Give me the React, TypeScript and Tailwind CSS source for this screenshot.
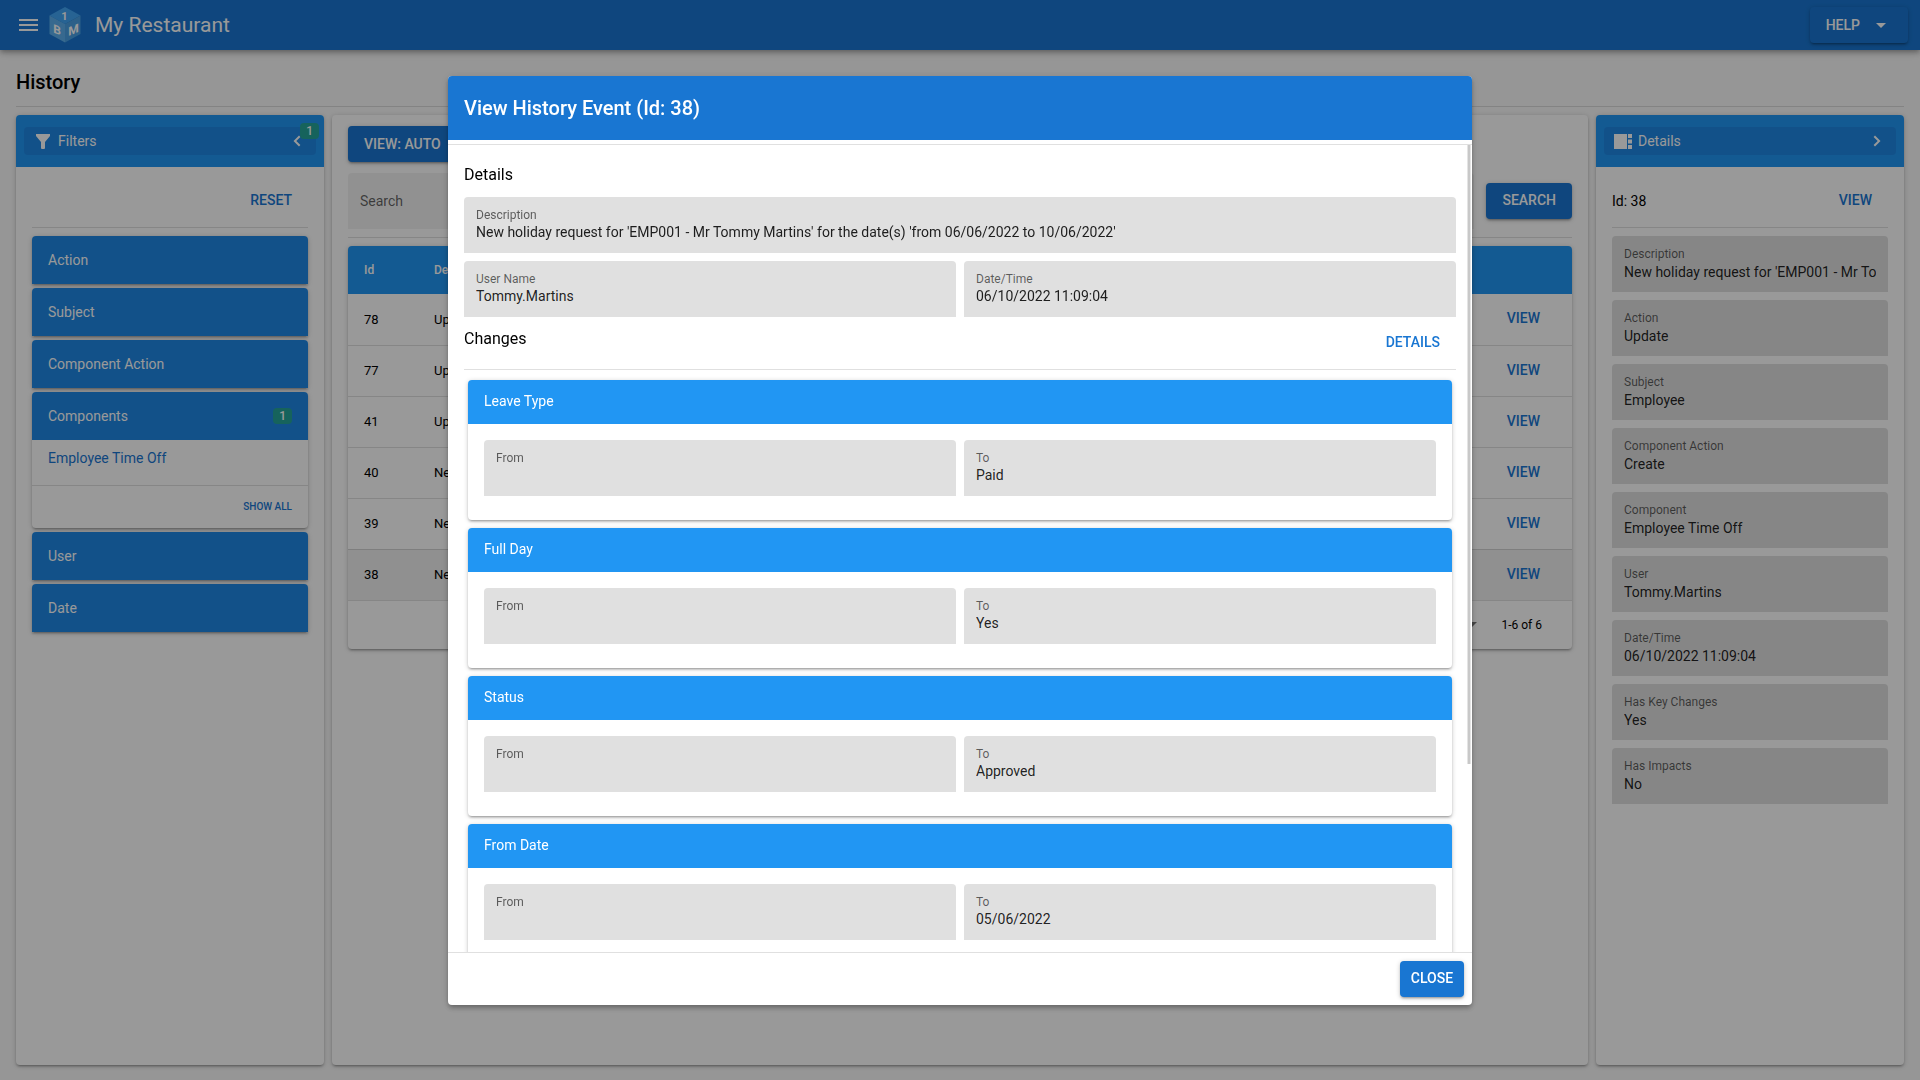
import React from "react";

const elevation =
  "shadow-[0_1px_5px_rgba(0,0,0,0.2),0_2px_2px_rgba(0,0,0,0.14),0_3px_1px_-2px_rgba(0,0,0,0.12)]";

const historyRows = [
  { id: 78, description: "Update" },
  { id: 77, description: "Update" },
  { id: 41, description: "Update" },
  { id: 40, description: "New holiday" },
  { id: 39, description: "New holiday" },
  { id: 38, description: "New holiday" },
];

const detailFields = [
  {
    label: "Description",
    value:
      "New holiday request for 'EMP001 - Mr Tommy Martins' for the date(s) 'from 06/06/2022 to 10/06/2022'",
  },
  { label: "Action", value: "Update" },
  { label: "Subject", value: "Employee" },
  { label: "Component Action", value: "Create" },
  { label: "Component", value: "Employee Time Off" },
  { label: "User", value: "Tommy.Martins" },
  { label: "Date/Time", value: "06/10/2022 11:09:04" },
  { label: "Has Key Changes", value: "Yes" },
  { label: "Has Impacts", value: "No" },
];

const changes = [
  { name: "Leave Type", from: "", to: "Paid" },
  { name: "Full Day", from: "", to: "Yes" },
  { name: "Status", from: "", to: "Approved" },
  { name: "From Date", from: "", to: "05/06/2022" },
];

function Logo() {
  return (
    <svg width="32" height="36" viewBox="0 0 32 36" aria-hidden="true">
      <path d="M16 0 31.500 8.500 16 17 0.500 8.500Z" fill="#42a5f5" />
      <path d="M0.500 8.500 16 17V35.500L0.500 27Z" fill="#5db0ee" />
      <path d="M31.500 8.500 16 17V35.500L31.500 27Z" fill="#4aa0e4" />
      <g fill="#fff" fontFamily="Roboto, sans-serif" fontWeight="700" textAnchor="middle">
        <text x="15.500" y="13" fontSize="11">
          1
        </text>
        <text transform="matrix(1 0.4 0 1 8 27)" fontSize="12">
          B
        </text>
        <text transform="matrix(1 -0.4 0 1 24.500 27)" fontSize="12">
          M
        </text>
      </g>
    </svg>
  );
}

function FilterIcon() {
  return (
    <svg width="14" height="15" viewBox="0 0 14 15" fill="currentColor" aria-hidden="true">
      <path d="M0 0H14V2L9 8V14Q9 15 8 15H6Q5 15 5 14V8L0 2Z" />
    </svg>
  );
}

function SidePanelIcon() {
  return (
    <svg width="18" height="15" viewBox="0 0 18 15" fill="currentColor" aria-hidden="true">
      <path d="M0 0H13V15H0ZM14 0H18V4H14ZM14 5.500H18V9.500H14ZM14 11H18V15H14Z" />
    </svg>
  );
}

function Chevron({ direction }: { direction: "left" | "right" }) {
  return (
    <svg width="8" height="12" viewBox="0 0 8 12" fill="currentColor" aria-hidden="true">
      {direction === "left" ? (
        <path d="M7.400 1.900 6 0.500 0.500 6 6 11.500 7.400 10.100 3.300 6Z" />
      ) : (
        <path d="M0.600 1.900 2 0.500 7.500 6 2 11.500 0.600 10.100 4.700 6Z" />
      )}
    </svg>
  );
}

function Caret() {
  return (
    <svg width="10" height="5" viewBox="0 0 10 5" fill="currentColor" aria-hidden="true">
      <path d="M0 0H10L5 5Z" />
    </svg>
  );
}

function FlatButton({ children }: { children: React.ReactNode }) {
  return (
    <button type="button" className="h-9 px-4 pb-0.5 text-sm font-medium text-[#1976d2]">
      {children}
    </button>
  );
}

interface FieldProps {
  id: string;
  label: string;
  value: string;
  compact?: boolean;
}

function Field({ id, label, value, compact }: FieldProps) {
  return (
    <div className="flex h-14 min-w-0 flex-1 flex-col rounded-t bg-[#e0e0e0] px-3 pt-2.5">
      <label htmlFor={id} className="text-xs leading-4 text-black/60">
        {label}
      </label>
      <input
        id={id}
        readOnly
        value={value}
        className={`w-full bg-transparent text-sm text-black/87 outline-none ${
          compact ? "h-[18px] leading-[18px]" : "h-5 leading-5"
        }`}
      />
    </div>
  );
}

function Badge({ count }: { count: number }) {
  return (
    <span className="block h-4 rounded bg-[#26a69a] px-1.5 text-xs leading-4 font-medium text-white">
      {count}
    </span>
  );
}

function FilterGroup({ title, count }: { title: string; count?: number }) {
  return (
    <button
      type="button"
      className="flex h-12 w-full items-center justify-between rounded-t bg-[#1e88e5] px-4 text-sm text-white"
    >
      {title}
      {count && <Badge count={count} />}
    </button>
  );
}

function FiltersPanel() {
  return (
    <aside className={`col-span-2 rounded bg-white ${elevation}`}>
      <div className="rounded-t bg-[#2196f3] px-2 py-3">
        <button
          type="button"
          className="relative flex h-7 w-full items-center rounded bg-[#1e88e5] pr-[15px] pl-3 text-sm text-white"
        >
          <FilterIcon />
          <span className="ml-2 flex-1 text-left">Filters</span>
          <Chevron direction="left" />
          <span className="absolute -top-1 -right-[3px]">
            <Badge count={1} />
          </span>
        </button>
      </div>
      <div className="p-4">
        <div className="flex justify-end">
          <FlatButton>RESET</FlatButton>
        </div>
        <hr className="my-2 border-black/12" />
        <div className="flex flex-col gap-1">
          {["Action", "Subject", "Component Action"].map((title) => (
            <div key={title} className={`rounded-t ${elevation}`}>
              <FilterGroup title={title} />
            </div>
          ))}
          <div className={`rounded ${elevation}`}>
            <FilterGroup title="Components" count={1} />
            <div className="h-[45px] px-4 pt-1.5">
              <a href="#time-off" className="text-sm leading-5 text-[#1976d2]">
                Employee Time Off
              </a>
            </div>
            <div className="flex h-[43px] items-center justify-end border-t border-black/12 px-4">
              <button type="button" className="pb-0.5 text-[10px] font-medium text-[#1976d2]">
                SHOW ALL
              </button>
            </div>
          </div>
          {["User", "Date"].map((title) => (
            <div key={title} className={`rounded-t ${elevation}`}>
              <FilterGroup title={title} />
            </div>
          ))}
        </div>
      </div>
    </aside>
  );
}

function HistoryTable() {
  return (
    <div className={`overflow-hidden rounded ${elevation}`}>
      <table className="w-full border-collapse text-left text-[13px]">
        <thead className="bg-[#2196f3] text-xs text-white">
          <tr className="h-12">
            <th className="w-[70px] px-4 font-medium">Id</th>
            <th className="px-4 font-medium">Description</th>
            <th className="px-4" />
          </tr>
        </thead>
        <tbody>
          {historyRows.map((row) => (
            <tr
              key={row.id}
              className={`h-[51px] border-b border-black/12 ${row.id === 38 ? "bg-black/6" : ""}`}
            >
              <td className="px-4">{row.id}</td>
              <td className="px-4">{row.description}</td>
              <td className="px-4 text-right">
                <FlatButton>VIEW</FlatButton>
              </td>
            </tr>
          ))}
        </tbody>
      </table>
      <div className="flex h-12 items-center justify-end pr-[30px] text-xs">
        <span className="mr-6 text-black/54">
          <Caret />
        </span>
        1-6 of 6
      </div>
    </div>
  );
}

function HistoryPanel() {
  return (
    <section className={`col-span-8 rounded bg-white px-4 pt-[11px] ${elevation}`}>
      <button
        type="button"
        className={`h-9 rounded bg-[#1976d2] px-4 text-sm font-medium text-white ${elevation}`}
      >
        VIEW: AUTO
      </button>
      <div className="mt-[11px] flex items-center gap-3">
        <input
          type="text"
          aria-label="Search"
          placeholder="Search"
          className="h-14 flex-1 rounded-t bg-black/5 px-3 text-sm placeholder:text-black/60"
        />
        <button
          type="button"
          className={`h-9 rounded bg-[#1976d2] px-4 pb-0.5 text-sm font-medium text-white ${elevation}`}
        >
          SEARCH
        </button>
      </div>
      <hr className="my-2 border-black/12" />
      <HistoryTable />
    </section>
  );
}

function DetailsPanel() {
  return (
    <aside className={`col-span-2 rounded bg-white ${elevation}`}>
      <div className="rounded-t bg-[#2196f3] px-2 py-3">
        <button
          type="button"
          className="flex h-7 w-full items-center rounded bg-[#1e88e5] pr-[15px] pl-2.5 text-sm text-white"
        >
          <SidePanelIcon />
          <span className="ml-1.5 flex-1 text-left">Details</span>
          <Chevron direction="right" />
        </button>
      </div>
      <div className="p-4">
        <div className="flex items-center justify-between text-sm">
          Id: 38
          <FlatButton>VIEW</FlatButton>
        </div>
        <hr className="my-2 border-black/12" />
        <div className="flex flex-col gap-2">
          {detailFields.map((field) => (
            <div key={field.label} className="flex">
              <Field id={`detail-${field.label}`} label={field.label} value={field.value} />
            </div>
          ))}
        </div>
      </div>
    </aside>
  );
}

function HistoryDialog() {
  return (
    <div className="fixed inset-0 z-20 flex items-center justify-center bg-black/40 pt-px">
      <div
        role="dialog"
        aria-labelledby="dialog-title"
        className="w-full max-w-5xl overflow-hidden rounded bg-white shadow-[0_2px_4px_-1px_rgba(0,0,0,0.2),0_4px_5px_rgba(0,0,0,0.14),0_1px_10px_rgba(0,0,0,0.12)]"
      >
        <h2
          id="dialog-title"
          className="bg-[#1976d2] p-4 text-xl leading-8 font-medium text-white"
        >
          View History Event (Id: 38)
        </h2>
        <div className="relative mt-1">
          <div className="h-[calc(75vh-1px)] overflow-y-auto border-y border-black/12 p-4 [scrollbar-width:none]">
            <h3 className="text-base leading-7">Details</h3>
            <div className="mt-2 flex">
              <Field
                id="event-description"
                label="Description"
                value={detailFields[0].value}
                compact
              />
            </div>
            <div className="mt-2 flex gap-2">
              <Field id="event-user" label="User Name" value="Tommy.Martins" compact />
              <Field id="event-date" label="Date/Time" value="06/10/2022 11:09:04" compact />
            </div>
            <div className="mt-2 flex items-start justify-between">
              <h3 className="text-base leading-7">Changes</h3>
              <FlatButton>DETAILS</FlatButton>
            </div>
            <hr className="mt-2 mb-2.5 border-black/12" />
            <div className="flex flex-col gap-2 px-1">
              {changes.map((change) => (
                <div key={change.name} className={`rounded bg-white ${elevation}`}>
                  <h4 className="rounded-t bg-[#2196f3] px-4 pt-[11px] pb-[13px] text-sm leading-5 text-white">
                    {change.name}
                  </h4>
                  <div className="flex gap-2 px-4 pt-4 pb-6">
                    <Field id={`${change.name}-from`} label="From" value={change.from} compact />
                    <Field id={`${change.name}-to`} label="To" value={change.to} compact />
                  </div>
                </div>
              ))}
            </div>
          </div>
          <div className="absolute top-px right-px h-[76.5%] w-1 border-x border-[#e4e4e4] bg-[#c8c8c8]" />
        </div>
        <div className="flex justify-end p-2">
          <button
            type="button"
            className={`h-9 min-w-16 rounded bg-[#1976d2] px-2 pb-0.5 text-sm font-medium text-white ${elevation}`}
          >
            CLOSE
          </button>
        </div>
      </div>
    </div>
  );
}

function App() {
  return (
    <div className="flex min-h-screen flex-col bg-[#fafafa] font-[Roboto,sans-serif] text-black">
      <header className="z-10 flex h-[50px] items-center bg-[#1976d2] px-3 text-white shadow-[0_2px_4px_-1px_rgba(0,0,0,0.2),0_4px_5px_rgba(0,0,0,0.14),0_1px_10px_rgba(0,0,0,0.12)]">
        <button type="button" aria-label="Menu" className="px-[7px]">
          <svg width="19" height="12" viewBox="0 0 19 12" fill="currentColor">
            <path d="M0 0H19V2H0ZM0 5H19V7H0ZM0 10H19V12H0Z" />
          </svg>
        </button>
        <span className="ml-1">
          <Logo />
        </span>
        <h1 className="ml-3.5 flex-1 pt-0.5 text-[21px]">My Restaurant</h1>
        <button
          type="button"
          className={`flex h-9 items-center rounded px-4 text-sm font-medium ${elevation}`}
        >
          HELP
          <span className="mr-1.5 ml-4">
            <Caret />
          </span>
        </button>
      </header>
      <main className="flex flex-1 flex-col px-4 pt-4 pb-[15px]">
        <h2 className="text-xl leading-8 font-medium">History</h2>
        <hr className="my-2 border-black/12" />
        <div className="grid flex-1 grid-cols-12 gap-2">
          <FiltersPanel />
          <HistoryPanel />
          <DetailsPanel />
        </div>
      </main>
      <HistoryDialog />
    </div>
  );
}

export default App;
